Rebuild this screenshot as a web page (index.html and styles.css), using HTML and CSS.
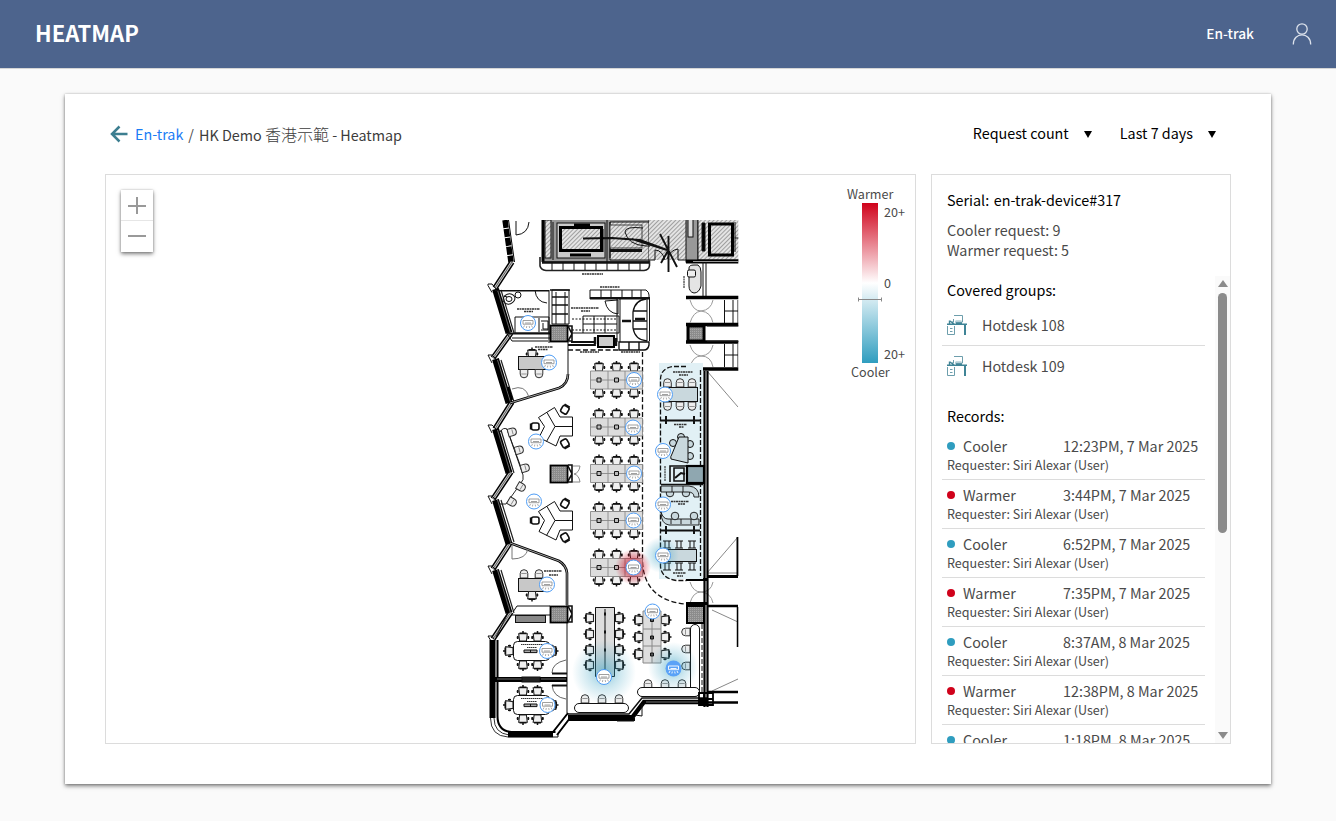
FILE: index.html
```html
<!DOCTYPE html>
<html lang="en">
<head>
<meta charset="utf-8">
<title>Heatmap</title>
<link rel="stylesheet" href="styles.css">
</head>
<body>
<header class="topbar">
  <h1 class="title">HEATMAP</h1>
  <div class="account">
    <span class="name">En-trak</span>
    <svg class="user" width="20" height="24" viewBox="0 0 20 24"><circle cx="10" cy="7" r="5.2"/><path d="M1.300 22.500C1.300 9.600 18.700 9.600 18.700 22.500"/></svg>
  </div>
</header>
<main class="card">
  <div class="bar">
    <nav class="crumbs">
      <svg class="back" width="18" height="18" viewBox="0 0 18 18"><path d="M9.500 1.500 2 9l7.500 7.500M2 9h15.500"/></svg>
      <a class="link">En-trak</a><span class="slash">/</span><span class="here">HK Demo <span class="cjk">香港示範</span> - Heatmap</span>
    </nav>
    <div class="filters">
      <div class="select"><span>Request count</span><i class="caret"></i></div>
      <div class="select"><span>Last 7 days</span><i class="caret"></i></div>
    </div>
  </div>
  <div class="panels">
    <section class="map">
      <svg class="plan" width="809" height="568" viewBox="106 175 809 568">
        <defs>
          <pattern id="hatch" width="3" height="3" patternUnits="userSpaceOnUse" patternTransform="rotate(45)"><rect width="3" height="3" fill="#e4e4e4"/><path d="M0 0V3" stroke="#888" stroke-width="1.500"/></pattern>
          <pattern id="dots" width="2" height="2" patternUnits="userSpaceOnUse"><rect width="2" height="2" fill="#a8a8a8"/><path d="M0 0h1v1h1v1" stroke="#666" stroke-width=".5" fill="none"/></pattern>
          <radialGradient id="cold"><stop offset="0" stop-color="#2f9dbf" stop-opacity=".55"/><stop offset=".5" stop-color="#2f9dbf" stop-opacity=".24"/><stop offset="1" stop-color="#2f9dbf" stop-opacity="0"/></radialGradient>
          <radialGradient id="hot"><stop offset="0" stop-color="#d0021b" stop-opacity=".8"/><stop offset=".5" stop-color="#d0021b" stop-opacity=".42"/><stop offset="1" stop-color="#d0021b" stop-opacity="0"/></radialGradient>
          <g id="task"><path d="M-4.300-3.800h8.600l-.9 7.300h-6.800z" fill="#f0f0f0" stroke="#222" stroke-width="1.100"/><path d="M0-6.500v2.700M-3.500-4.300h7M-5.300-1.500v3M5.300-1.500v3M-6.300 0h2M4.300 0h2" stroke="#111" stroke-width="1.500"/></g>
          <g id="seat"><path d="M-3.800 4v-4.500q0-3.800 3.800-3.800t3.800 3.800V4z" fill="#eee" stroke="#333" stroke-width="1"/><path d="M-2.700-.5h5.400" stroke="#555" stroke-width=".6"/></g>
          <g id="arm"><rect x="-3.500" y="-3.500" width="7.500" height="7" rx="2" fill="#fff" stroke="#111" stroke-width="1.600"/><path d="M-4.300-3v6" stroke="#111" stroke-width="1.800"/></g>
          <g id="pod">
            <use href="#task" x="599" y="-12.500"/><use href="#task" x="616.500" y="-12.500"/><use href="#task" x="634" y="-12.500"/>
            <use href="#task" transform="translate(599 12.500) scale(1 -1)"/><use href="#task" transform="translate(616.500 12.500) scale(1 -1)"/><use href="#task" transform="translate(634 12.500) scale(1 -1)"/>
            <path d="M590.500-9h52V9h-52zM590.500 0h52M608-9V9M625-9V9" fill="#dcdcdc" stroke="#888" stroke-width=".9"/>
            <path d="M597-2h4v4h-4zM614.500-2h4v4h-4z" fill="#bbb" stroke="#111" stroke-width="1"/>
          </g>
          <g id="meeting">
            <use href="#task" x="523" y="-13.500"/><use href="#task" x="537.500" y="-13.500"/>
            <use href="#task" transform="translate(523 13.500) scale(1 -1)"/><use href="#task" transform="translate(537.500 13.500) scale(1 -1)"/>
            <use href="#task" transform="translate(509.500 0) rotate(-90)"/><use href="#task" transform="translate(552 0) rotate(90)"/>
            <rect x="513.500" y="-9.500" width="36" height="19" rx="4" fill="#fff" stroke="#111"/>
            <path d="M521-6.500h22M527-3.500h10" stroke="#333" stroke-width="1.200" stroke-dasharray="1.500 .5"/>
            <path d="M524-1h13v2.600h-13zM530.500-1v2.600" fill="#aaa" stroke="#111" stroke-width="1"/>
          </g>
          <g id="yshape">
            <path d="M-16.500-9 -.5-19 5-9.500H17.500V9.500H5L1 19.500-16 11-10.500 0zM0 0H17.500M0 0l-8-14M0 0l-8.500 15" fill="#fff" stroke="#111" stroke-width="1"/>
            <use href="#arm" transform="translate(-20 0)"/><use href="#arm" transform="translate(10 -17) rotate(120)"/><use href="#arm" transform="translate(10 17) rotate(-120)"/>
          </g>
          <g id="ac" stroke-width="1"><circle r="7.500" fill="#fff" stroke="#4d9cf5"/><path d="M-5-2.500H5V1.200H-5zM-3 0h6" fill="none" stroke="#888" stroke-width=".8"/><path d="M-3.500 2.500l-1 2M-1.200 3l-.4 2M1.200 3l.4 2M3.500 2.500l1 2" stroke="#999" stroke-width=".8"/></g>
          <clipPath id="sheet"><rect x="480" y="220" width="258.300" height="522"/></clipPath>
        </defs>
        <g clip-path="url(#sheet)" fill="none" stroke="#111" stroke-width="1">
          <!-- lift core -->
          <rect x="543" y="218" width="106" height="44" fill="#999" stroke="#222"/>
          <path d="M610 222h39v38h-39z" fill="url(#hatch)"/><path d="M610 222v36M607 218v44M553 222v38M544 237h7"/>
          <rect x="545" y="220" width="6" height="38" fill="url(#hatch)"/>
          <rect x="557" y="223" width="48" height="35" fill="#ccc"/>
          <rect x="560.500" y="227.500" width="41" height="23" fill="url(#hatch)" stroke="#000" stroke-width="3"/>
          <path d="M574 225h16M570 255h21" stroke="#000" stroke-width="3"/>
          <rect x="610" y="225" width="32" height="23" fill="url(#hatch)" stroke="#444"/><path d="M610 250.500h32" stroke-width="3"/>
          <rect x="649" y="218" width="37" height="42" fill="url(#hatch)" stroke="none"/>
          <path d="M643 228q-18-2-18 4 3 13 21 14h4M655 260v-10q7 0 10 10M678 260v-11q-8 1-11 10M649 260h6M678 260h8"/>
          <rect x="686" y="218" width="12" height="44" fill="#999"/><rect x="688" y="219" width="5" height="18" fill="#ddd"/>
          <rect x="698" y="218" width="42" height="42" fill="url(#hatch)"/>
          <path d="M702 223h3v28h-3z" fill="#000"/><rect x="709.500" y="224" width="23" height="31" fill="url(#hatch)" stroke="#000" stroke-width="3"/>
          <path d="M735 222v30M735 238h5"/>
          <path d="M686 261.500h54" stroke="#000" stroke-width="4"/><path d="M693 261.500h45" stroke="#999" stroke-width="1"/>
          <path d="M583 238.500 612 238 640 240l27 10M632 239l35 11M660 234l17 33M668.500 236v36M661 263l8-14" stroke="#111" stroke-width="1.900"/>
          <path d="M602 229v23M543 220v42" stroke="#000" stroke-width="3"/>
          <!-- lockers -->
          <path d="M540 257v9q1 4 6 4.500h98q5-.5 5.500-5v-5" stroke="#222" stroke-width="1.600"/><path d="M542 262.500h107" stroke-width="2.500"/>
          <path d="M552 262v8M563 262v8M574 262v8M585 262v8M596 262v8M607 262v8M618 262v8M629 262v8M640 262v8"/>
          <path d="M582 274h21M600 287h20M517 309h23M524 311.500h9M571 308h28M581 311h9M535 347h18M538 349.500h10M580 352h19M621 352h19" stroke="#333" stroke-width="1.500" stroke-dasharray="2 .5"/>
          <path d="M590 290h56q3 2 3 5v4h-59zM601 290v8M611 290v8M622 290v8M632 290v8M641 290v8"/>
          <path d="M590 298h59" stroke-width="1.800"/>
          <!-- facade -->
          <path d="M505 220l6 42" stroke="#000" stroke-width="5.500" stroke-dasharray="8 1"/><path d="M508.500 220l6 42" stroke="#000"/>
          <path d="M512 262l-17 26M511 333l-18 25M512 402l-17 27M511 472l-18 27M510 543l-17 26M511 612l-18 27" stroke="#000" stroke-width="5.500"/>
          <path d="M512 262l-17 26M511 333l-18 25M512 402l-17 27M511 472l-18 27M510 543l-17 26M511 612l-18 27" stroke="#ccc" stroke-width="2.600"/>
          <path d="M512 262l-17 26M511 333l-18 25M512 402l-17 27M511 472l-18 27M510 543l-17 26M511 612l-18 27" stroke="#444" stroke-width=".8"/>
          <path d="M495.500 289l13.500 44M495.500 359l13.500 44M495.500 429l13.500 44M495.500 500l13.500 44M495.500 570l13.500 43" stroke="#000" stroke-width="7"/>
          <path d="M501 290l13 43M501 360l13 42M501 430l13 43M501 500l13 42M501 570l13 43" stroke="#222" stroke-width="1.200"/>
          <path d="M497.500 290l13 43M497.500 360l13 42M497.500 430l13 43M497.500 500l13 42M497.500 570l13 43" stroke="#aaa" stroke-width=".6"/>
          <path d="M496 289l-4-5h-4v1.500l4 7M496 359l-4-4h-4l4 8M496 429l-4-4h-4l4 8M496 500l-4-4h-4l4 8M496 570l-4-4h-4l4 8M494 639l-2-3h-4l3 5"/>
          <path d="M492.500 640v78" stroke="#000" stroke-width="6"/><path d="M497.500 640v76q0 15 14 16h44" stroke="#000" stroke-width="2"/><path d="M490.500 718q0 18 17.500 19h45M494 718q0 15 15 17" stroke="#333"/>
          <path d="M508 734.500h45" stroke="#000" stroke-width="5.500"/><path d="M553 732l15-19M557 735l13-17" stroke="#000" stroke-width="2"/><path d="M553 737h5v-3"/>
          <!-- pantry and reception -->
          <path d="M516 221v14q12-1 13-13M495 290.500h54M499 291h50M549 290v53M552 290v34h17v-34zM556 292v32M565 292v32"/>
          <path d="M550 290h20M552 297h16M552 305h16M552 314h16" stroke-width="1.500"/>
          <path d="M535 290q1 12 12 13"/>
          <ellipse cx="509" cy="299" rx="6" ry="5" transform="rotate(-20 509 299)"/><ellipse cx="509" cy="299" rx="3" ry="2.500"/><path d="M504 296l3 1" stroke-width="1.300"/><circle cx="518" cy="295" r="3"/>
          <path d="M515 333v-16h34v16zM539 318v14M541 321h7v9h-7M543 323v6h5"/>
          <path d="M508 333.500h60" stroke-width="2.200"/><path d="M512 338h38M508 335l4 6h36M568 342v32"/>
          <path d="M583 316v17M594 316v17M605 316v17M583 316h36v17h-48M583 324h34"/><path d="M572 319h45M572 330h45" stroke-dasharray="2 1.500"/>
          <path d="M620 297v45M617 297v45M647 297v44M649.500 297v44M605 301q2 12 13 13v-14z"/><path d="M646 299q-11 1-13 13v16q2 12 14 13M633 311h14M633 321h14M633 329h14" stroke-width="1.300"/><path d="M635 319h10M622 321h9" stroke-width="2.500"/>
          <path d="M571 342h24v3h-27" stroke-width="1.800"/><rect x="598" y="336" width="16" height="11" fill="#ccc" stroke="#000" stroke-width="2"/><path d="M595 337v7M616 338v8" stroke-width="2.500"/>
          <path d="M619 342h30v3q-1 5-5 5h-25zM629 342v8M639 342v8" stroke-width="1.400"/>
          <path d="M568 350h51M642.500 352v210q2 38 43 42h2" stroke-dasharray="5 2.500" stroke-width="1.300"/>
          <rect x="550.500" y="325.500" width="17" height="16" fill="url(#dots)" stroke="#000" stroke-width="1.800"/><path d="M568 326h4v15h-4M568 326l4 8-4 7" stroke-width="1.600"/>
          <path d="M689 268q0-3 5-3h4q3 2 3 7v14q-2 7-7 7-5-1-5-7z" fill="#e4e4e4"/><rect x="687.500" y="270" width="8" height="7" rx="1.500" fill="#eee"/><path d="M684 276v12" stroke-dasharray="2 .5"/><path d="M703 262v36M706 262v34"/>
          <!-- right side stairs -->
          <path d="M686 297.500h53M686 324.500h53M686 342h53M686 369h53" stroke="#000" stroke-width="3.500"/>
          <path d="M707 326h32M707 341.500h32M733 300v23M738 300v23M724.500 300v23M724 311h14M733 344v23M724.500 344v23M738 344v23M724 355h14"/>
          <path d="M690 300q3 11 11 11 10-1 12-11M690 323q3-11 11-12 10 1 12 12M690 345q3 10 11 11 10-1 12-11M690 367q3-11 11-11 10 0 12 11M690 582q3 10 11 10 10 0 12-10M690 603q3-11 11-11 10 1 12 11" stroke="#999"/>
          <rect x="688" y="326" width="16" height="15" fill="url(#dots)" stroke="#000" stroke-width="3"/>
          <path d="M707 371 738 407M707 573 738 537v39M708 573h30M712 610l26 12M712 691l26-12" stroke="#888"/>
          <!-- private offices -->
          <path d="M568 374q0 10-9 14l-49 15M512 400l-4-13M510 543l49 18q7 4 8 12v32" stroke="#000" stroke-width="2.600"/><path d="M568 374q0 10-9 14l-49 15M510 543l49 18q7 4 8 12v32" stroke="#ccc" stroke-width=".8"/>
          <path d="M512 389q13-5 17 8M512 545v14q14 0 16-10" stroke="#777"/>
          <use href="#task" x="532" y="354"/><rect x="518.500" y="356.500" width="30" height="13" fill="#c8c8c8"/><use href="#seat" transform="translate(524 373.500) scale(1 -1)"/><use href="#seat" transform="translate(539 373.500) scale(1 -1)"/>
          <use href="#seat" x="524" y="574"/><use href="#seat" x="539" y="574"/><rect x="518.500" y="578.500" width="30" height="13" fill="#c8c8c8"/><use href="#task" transform="translate(532 595) scale(1 -1)"/>
          <path d="M544 571h18M549 575h9" stroke="#333" stroke-width="1.500" stroke-dasharray="2 .5"/>
          <use href="#yshape" x="555" y="426.500"/><use href="#yshape" x="555" y="520.500"/>
          <path d="M500 432q3-5 7-3l16 46q1 5-2 8l-15 21h-6M507 429l16 44" stroke-width=".9"/>
          <use href="#seat" transform="translate(512 432) rotate(75)"/><use href="#seat" transform="translate(519 450) rotate(75)"/><use href="#seat" transform="translate(525 468) rotate(75)"/><use href="#seat" transform="translate(521 487) rotate(120)"/><use href="#seat" transform="translate(512 502) rotate(120)"/>
          <rect x="550.500" y="465.500" width="17" height="17" fill="url(#dots)" stroke="#000" stroke-width="1.800"/><path d="M568 465h4v17h-4M568 466l4 8-4 7" stroke-width="1.600"/><path d="M573 466h7q-1 7-6 8 5 1 6 8h-7" stroke="#888"/>
          <!-- meeting rooms -->
          <path d="M513 612l4-6h33M567 605v108M508 613l-12 24M512 615h40"/><rect x="515.500" y="615.500" width="30" height="7" fill="#888"/>
          <rect x="550.500" y="606.500" width="17" height="16" fill="url(#dots)" stroke="#000" stroke-width="1.800"/><path d="M568 606h4v16h-4M568 606l4 8-4 8" stroke-width="1.600"/>
          <path d="M495 679.500h72" stroke="#000" stroke-width="5"/><path d="M497 679h25M541 679h25" stroke="#888" stroke-width=".8"/><rect x="522" y="677" width="18" height="5" fill="#222"/>
          <path d="M566 660q-14 3-14 13M552 685q1 12 14 14" stroke="#666"/><path d="M552 673.500h15M552 685.500h15" stroke-width="2"/>
          <use href="#meeting" y="651"/><use href="#meeting" y="705"/>
          <!-- bottom wall -->
          <path d="M568 716.500h64M568 719.500h67" stroke="#000" stroke-width="3"/><path d="M568 714h61l13-16h65" stroke-width="1.500"/><path d="M631 719l13-17h63" stroke="#000" stroke-width="4.500"/><path d="M646 702h52" stroke="#aaa" stroke-width=".7"/><path d="M617 721h17v-4M635 715l7 1v-12"/>
          <path d="M704.500 371v336M707.500 371v336" stroke="#000" stroke-width="2.200"/>
          <path d="M708 692h30M708 702.500h30M708 606h30M738 607v40" stroke="#000" stroke-width="2.500"/>
          <path d="M708 576.500h30M738 537v39M686 579.500h21M686 603.500h21" stroke="#000" stroke-width="3"/>
          <!-- open area -->
          <use href="#pod" y="380"/><use href="#pod" y="427"/><use href="#pod" y="473.500"/><use href="#pod" y="520.500"/><use href="#pod" y="567.500"/>
          <use href="#task" transform="translate(590 618) rotate(-90)"/><use href="#task" transform="translate(590 634) rotate(-90)"/><use href="#task" transform="translate(590 650) rotate(-90)"/><use href="#task" transform="translate(590 665) rotate(-90)"/>
          <use href="#task" transform="translate(619 618) rotate(90)"/><use href="#task" transform="translate(619 634) rotate(90)"/><use href="#task" transform="translate(619 650) rotate(90)"/><use href="#task" transform="translate(619 665) rotate(90)"/>
          <path d="M595.500 607.500h19v69h-19zM605 609v67" fill="#ddd"/><path d="M604 614h2M604 632h2M604 650h2" stroke-width="3"/>
          <use href="#task" transform="translate(639 620) rotate(-90)"/><use href="#task" transform="translate(639 637) rotate(-90)"/><use href="#task" transform="translate(639 654) rotate(-90)"/><use href="#task" transform="translate(665 620) rotate(90)"/><use href="#task" transform="translate(665 637) rotate(90)"/><use href="#task" transform="translate(665 654) rotate(90)"/>
          <path d="M643 611h18v52h-18zM652 611v52M643 629h18M643 646h18" fill="#ddd" stroke="#888"/><path d="M650.500 618.500h3v3h-3zM650.500 636h3v3h-3zM650.500 653h3v3h-3z" fill="#555"/>
          <use href="#seat" x="585" y="699"/><use href="#seat" x="602" y="699"/><use href="#seat" x="619" y="699"/><rect x="574.500" y="703.500" width="54" height="9" rx="4.500" fill="#fff"/>
          <use href="#seat" x="648" y="684"/><use href="#seat" x="665" y="684"/><use href="#seat" x="682" y="684"/><use href="#seat" transform="translate(686 632) rotate(-90)"/><use href="#seat" transform="translate(686 649) rotate(-90)"/><use href="#seat" transform="translate(686 666) rotate(-90)"/>
          <rect x="690.500" y="624.500" width="9" height="72" rx="4.500" fill="#fff"/><rect x="637.500" y="687.500" width="62" height="9" rx="4.500" fill="#fff"/>
          <path d="M702 624v70" stroke-dasharray="5 2"/><rect x="687" y="606" width="17" height="17" fill="url(#dots)" stroke="#000" stroke-width="2"/><path d="M699 693h14v12h-14zM704 693v12M699 699h14" stroke="#000" stroke-width="1.800"/>
          <!-- glass rooms -->
          <rect x="659" y="363" width="44" height="216" fill="#e1f0f5" stroke="none"/>
          <path d="M686 366.500h-13q-13 2-12.500 14v186q1 12 16 14h10M700.500 370v206" stroke-dasharray="5 2" stroke-width="1.300"/>
          <path d="M673 372h20M679 375h9M674 424.500h13M679 427h5M671 501.500h18M678 504h7M673 573h13M677 576h6" stroke="#333" stroke-width="1.500" stroke-dasharray="2 .5"/>
          <use href="#seat" x="667.500" y="383"/><use href="#seat" x="680" y="383"/><use href="#seat" x="692" y="383"/><use href="#seat" transform="translate(667.500 406) scale(1 -1)"/><use href="#seat" transform="translate(680 406) scale(1 -1)"/><use href="#seat" transform="translate(692 406) scale(1 -1)"/>
          <rect x="664.500" y="387.500" width="33" height="14" fill="#c9d8dd"/>
          <path d="M661 420.500h39M661 530.500h39" stroke-width="1.800"/><path d="M666 416v8M694 416v8M666 526v8M694 526v8" stroke-width="2"/>
          <g fill="#c9d8dd"><circle cx="681" cy="437" r="3.500"/><circle cx="673" cy="443" r="3.500"/><circle cx="690" cy="444" r="3.500"/><circle cx="690" cy="456" r="3.500"/></g>
          <path d="M679 437h9v26l-17-4q-1-2 1-5z" fill="#c9d8dd"/>
          <path d="M670 482v-16h17v16M674 468h10v13h-10zM661 484.500h42" stroke-width="1.600"/><path d="M665 466v15" stroke-dasharray="2 .6"/><rect x="687" y="466" width="17" height="17" fill="#8fa7b0" stroke="#000" stroke-width="2.200"/><path d="M675 478l6-5 4 1" stroke-width="2"/>
          <g fill="#c9d8dd" stroke-width=".9"><circle cx="670" cy="493" r="3.800"/><circle cx="686" cy="493" r="3.800"/><path d="M661 486h28q10 1 10 11h-5q0-5-6-5h-27zM672 486v6M683 486v6M661 512q2 7 7 7h31v6h-30q-8-1-8-13zM671 519v5M681 519v5M691 519v5"/><circle cx="675" cy="516" r="3.800"/><circle cx="694" cy="516" r="3.800"/></g>
          <path d="M663 541h8M663 548h8M665 541v7M669 541v7M675 541h8M675 548h8M677 541v7M681 541v7M688 541h8M688 548h8M690 541v7M694 541v7M663 563h8M663 570h8M665 563v7M669 563v7M675 563h8M675 570h8M677 563v7M681 563v7M688 563h8M688 570h8M690 563v7M694 563v7"/>
          <rect x="664.500" y="549.500" width="32" height="12" fill="#c9d8dd"/>
          <g stroke="none"><circle cx="633" cy="567" r="18" fill="url(#hot)"/><circle cx="661" cy="555" r="18" fill="url(#cold)"/><circle cx="604" cy="672" r="32" fill="url(#cold)"/><circle cx="673" cy="667" r="25" fill="url(#cold)"/></g>
        </g>
        <g>
          <use href="#ac" x="528" y="323"/><use href="#ac" x="549" y="362.500"/><use href="#ac" x="536" y="441.500"/><use href="#ac" x="534" y="501.500"/><use href="#ac" x="547" y="584.500"/><use href="#ac" x="547" y="651"/><use href="#ac" x="547.500" y="705"/>
          <use href="#ac" x="634" y="380"/><use href="#ac" x="633" y="427.500"/><use href="#ac" x="634" y="473.500"/><use href="#ac" x="633.500" y="520.500"/><use href="#ac" x="633.500" y="567.500"/>
          <use href="#ac" x="665" y="394.500"/><use href="#ac" x="663" y="451"/><use href="#ac" x="663" y="504.500"/><use href="#ac" x="663" y="555.500"/><use href="#ac" x="652.500" y="611.500"/><use href="#ac" x="604" y="677"/>
          <g transform="translate(673.500 668.500)" fill="none" stroke="#fff" stroke-width=".9"><circle r="8" fill="#5aa2f7" stroke="none"/><path d="M-5-2.500H5V1.200H-5zM-3 0h6M-3.500 2.500l-1 2M-1.200 3l-.4 2M1.200 3l.4 2M3.500 2.500l1 2"/></g>
        </g>
      </svg>
      <div class="zoom">
        <button class="zbtn"><svg width="18" height="18" viewBox="0 0 18 18"><path d="M0 9h18M9 0v17"/></svg></button>
        <button class="zbtn"><svg width="18" height="18" viewBox="0 0 18 18"><path d="M0 9h18"/></svg></button>
      </div>
      <div class="legend">
        <div class="cap warm">Warmer</div>
        <div class="scale">
          <div class="ramp"><svg class="tick" width="24" height="5" viewBox="0 0 24 5"><path d="M.5 .5v4M.5 2.500h23M23.500 .5v4"/></svg></div>
          <div class="nums"><span>20+</span><span>0</span><span>20+</span></div>
        </div>
        <div class="cap cool">Cooler</div>
      </div>
    </section>
    <aside class="side">
      <div class="device">
        <h2 class="heading serial">Serial: en-trak-device#317</h2>
        <p class="counts">Cooler request: 9<br>Warmer request: 5</p>
      </div>
      <div class="scroller">
        <div class="content">
          <h2 class="heading">Covered groups:</h2>
          <div class="group"><svg class="desk" width="20" height="20" viewBox="0 0 20 20"><path class="mid" d="M7 .5h8.500v6.500H8M6.500 4v3.500"/><path class="pale" d="M8.500 5.500h6"/><path class="dark" d="M0 9.300h20M2.500 9V5.500M5.500 9V6.500M3 6l4 3M9 8h6"/><path class="leg" d="M18 9v11"/><path class="mid" d="M.5 11v8.500h7V11M3 13.500h2.500M3 16.500h2.500"/></svg><span>Hotdesk 108</span></div>
          <div class="group"><svg class="desk" width="20" height="20" viewBox="0 0 20 20"><path class="mid" d="M7 .5h8.500v6.500H8M6.500 4v3.500"/><path class="pale" d="M8.500 5.500h6"/><path class="dark" d="M0 9.300h20M2.500 9V5.500M5.500 9V6.500M3 6l4 3M9 8h6"/><path class="leg" d="M18 9v11"/><path class="mid" d="M.5 11v8.500h7V11M3 13.500h2.500M3 16.500h2.500"/></svg><span>Hotdesk 109</span></div>
          <h2 class="heading records">Records:</h2>
          <div class="rec"><div class="line"><i class="dot blue"></i><span class="kind">Cooler</span><span>12:23PM, 7 Mar 2025</span></div><div class="who">Requester: Siri Alexar (User)</div></div>
          <div class="rec"><div class="line"><i class="dot red"></i><span class="kind">Warmer</span><span>3:44PM, 7 Mar 2025</span></div><div class="who">Requester: Siri Alexar (User)</div></div>
          <div class="rec"><div class="line"><i class="dot blue"></i><span class="kind">Cooler</span><span>6:52PM, 7 Mar 2025</span></div><div class="who">Requester: Siri Alexar (User)</div></div>
          <div class="rec"><div class="line"><i class="dot red"></i><span class="kind">Warmer</span><span>7:35PM, 7 Mar 2025</span></div><div class="who">Requester: Siri Alexar (User)</div></div>
          <div class="rec"><div class="line"><i class="dot blue"></i><span class="kind">Cooler</span><span>8:37AM, 8 Mar 2025</span></div><div class="who">Requester: Siri Alexar (User)</div></div>
          <div class="rec"><div class="line"><i class="dot red"></i><span class="kind">Warmer</span><span>12:38PM, 8 Mar 2025</span></div><div class="who">Requester: Siri Alexar (User)</div></div>
          <div class="rec"><div class="line"><i class="dot blue"></i><span class="kind">Cooler</span><span>1:18PM, 8 Mar 2025</span></div></div>
        </div>
        <div class="track"><i class="up"></i><i class="thumb"></i><i class="down"></i></div>
      </div>
    </aside>
  </div>
</main>
</body>
</html>
```

FILE: styles.css
```css
* { box-sizing: border-box; }
body { margin: 0; background: #fafafa; color: #4a4a4a; font: 14.35px/20px "Noto Sans CJK TC", sans-serif; height: 821px; overflow: hidden; }
h1, h2, p { margin: 0; font-weight: 400; }
.topbar { height: 69px; background: #4d648d; border-bottom: 1px solid #d5d5d5; color: #fff; display: flex; justify-content: space-between; align-items: center; padding: 0 24px 0 35px; }
.title { font-size: 22px; font-weight: 700; line-height: 30px; padding-bottom: 4px; }
.account { display: flex; align-items: center; gap: 38px; font-weight: 500; font-size: 13.7px; }
.name { padding-bottom: 2px; }
.user { fill: none; stroke: #dce2ec; stroke-width: 1.3; }
.card { width: 1206px; height: 690px; margin: 25px 0 0 65px; padding: 0 40px; background: #fff; box-shadow: 0 2px 4px rgba(0,0,0,.5), 0 0 2px rgba(0,0,0,.2); }
.bar { height: 80px; display: flex; align-items: center; justify-content: space-between; padding: 0 15px 0 5px; }
.crumbs { display: flex; align-items: center; }
.back { fill: none; stroke: #3c7e90; stroke-width: 2.5; margin-right: 7px; }
.link { color: #1a7cf5; }
.slash { margin: 0 5px; }
.here { color: #3c3c3c; padding-top: 1px; }
.cjk { font-size: 16px; font-weight: 300; }
.filters { display: flex; gap: 28px; color: #000; padding-bottom: 2px; }
.select { display: flex; align-items: center; gap: 15px; }
.caret { border: 4px solid transparent; border-top: 7px solid #000; border-bottom: 0; margin-top: 3px; }
.panels { display: flex; gap: 15px; height: 570px; }
.map { position: relative; width: 811px; border: 1px solid #dcdcdc; }
.plan { display: block; }
.zoom { position: absolute; left: 15px; top: 15px; width: 32px; height: 62px; background: #fff; box-shadow: 0 2px 4px rgba(0,0,0,.5), 0 0 2px rgba(0,0,0,.2); display: flex; flex-direction: column; }
.zbtn { height: 30px; padding: 2px 0 0; border: 0; background: none; display: flex; align-items: center; justify-content: center; }
.zbtn + .zbtn { border-top: 1px solid #e6e6e6; padding-top: 0; }
.zbtn svg { fill: none; stroke: #999; stroke-width: 2; }
.legend { position: absolute; left: 734px; top: 9px; width: 70px; font-size: 12.6px; }
.cap { height: 19px; line-height: 20px; }
.warm { padding-left: 7px; }
.cool { padding-left: 11px; line-height: 18px; }
.scale { display: flex; gap: 6px; height: 160px; padding-left: 22px; }
.ramp { width: 16px; background: linear-gradient(#d0021b, #fff 50%, #2f9dbf); padding-top: 94px; }
.tick { display: block; margin-left: -4px; fill: none; stroke: #888; }
.nums { display: flex; flex-direction: column; justify-content: space-between; line-height: 18px; font-size: 12.6px; }
.side { width: 300px; border: 1px solid #dcdcdc; display: flex; flex-direction: column; overflow: hidden; }
.device { height: 101px; padding: 15px 15px 0; }
.heading { font-size: 14.35px; line-height: 20px; color: #000; }
.serial { word-spacing: 1.5px; }
.counts { margin-top: 10px; }
.scroller { flex: 1; min-height: 0; display: flex; justify-content: space-between; overflow: hidden; }
.content { width: 273px; padding-left: 10px; }
.content .heading { padding: 4px 5px 0; height: 28px; }
.group { height: 41px; display: flex; align-items: center; gap: 15px; padding-left: 5px; }
.group + .group { border-top: 1px solid #dcdcdc; }
.desk { fill: none; }
.mid { stroke: #6d9eac; }
.pale { stroke: #c5dbe1; }
.dark { stroke: #3f8496; stroke-width: 1.4; }
.leg { stroke: #3f8496; stroke-width: 2; }
.content .records { height: 45px; padding-top: 20px; }
.rec { height: 49px; padding: 5px 5px 0; border-bottom: 1px solid #dcdcdc; }
.line { display: flex; align-items: center; height: 19px; }
.dot { width: 8px; height: 8px; border-radius: 50%; margin-right: 8px; }
.blue { background: #2f9dbf; }
.red { background: #d0021b; }
.kind { width: 100px; }
.who { font-size: 12.55px; line-height: 18px; padding-top: 1px; }
.track { width: 15px; background: #fafafa; display: flex; flex-direction: column; align-items: center; padding: 4px 0; }
.up { border: 5px solid transparent; border-bottom: 7px solid #8b8b8b; border-top: 0; }
.thumb { width: 9px; height: 240px; border-radius: 5px; background: #8b8b8b; margin-top: 6px; }
.down { border: 5px solid transparent; border-top: 7px solid #8b8b8b; border-bottom: 0; margin-top: auto; }
```
